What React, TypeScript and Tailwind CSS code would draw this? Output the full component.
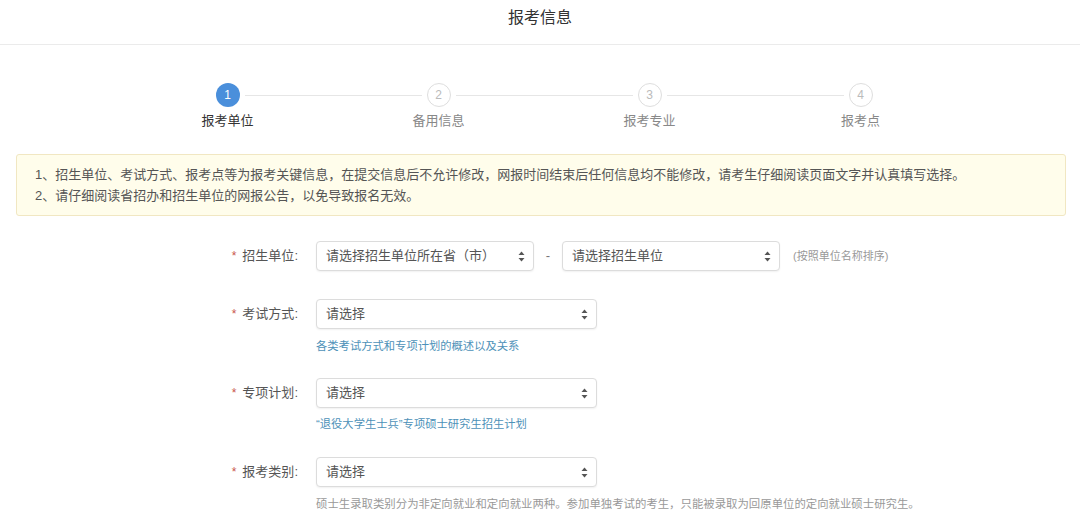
import React from "react";

const steps = ["报考单位", "备用信息", "报考专业", "报考点"];

function Arrows() {
  return (
    <svg width="7" height="11" viewBox="0 0 7 11" className="shrink-0">
      <path d="M3.5 0.5 L6.5 4 L0.5 4 Z" fill="#555" />
      <path d="M3.5 10.5 L6.5 7 L0.5 7 Z" fill="#555" />
    </svg>
  );
}

function FakeSelect({ text, width }: { text: string; width: string }) {
  return (
    <div
      className={`${width} h-[30px] flex items-center justify-between pl-[9px] pr-[8px] border border-[#dcdcdc] rounded-[4px] bg-white shadow-[0_1px_2px_rgba(0,0,0,0.06)] text-[13px] text-[#555]`}
    >
      <span>{text}</span>
      <Arrows />
    </div>
  );
}

function Label({ text }: { text: string }) {
  return (
    <div className="w-[116px] shrink-0 flex justify-end items-center pr-[18px] text-[13px] text-[#555]">
      <span className="text-[#c9564d] mr-[6px] text-[12px]">*</span>
      <span>{text}:</span>
    </div>
  );
}

export default function App() {
  return (
    <div className="w-[1080px] h-[520px] bg-white overflow-hidden font-['Liberation_Sans','Noto_Sans_CJK_SC',sans-serif]">
      {/* header */}
      <div className="h-[45px] border-b border-[#ebebeb] flex items-center justify-center">
        <span className="text-[16px] text-[#333] -mt-[9px]">报考信息</span>
      </div>

      {/* steps */}
      <div className="flex ml-[122px] pt-[38px]">
        {steps.map((s, i) => (
          <div key={s} className="w-[211px] flex flex-col items-center">
            <div className="w-full flex items-center">
              <div className={`flex-1 h-px mr-[5px] ${i === 0 ? "" : "bg-[#e6e6e6]"}`} />
              {i === 0 ? (
                <div className="w-[24px] h-[24px] rounded-full bg-[#4a8fdb] text-white text-[12px] flex items-center justify-center">
                  {i + 1}
                </div>
              ) : (
                <div className="w-[24px] h-[24px] rounded-full border border-[#dedede] text-[#bbb] text-[12px] flex items-center justify-center">
                  {i + 1}
                </div>
              )}
              <div className={`flex-1 h-px ml-[5px] ${i === steps.length - 1 ? "" : "bg-[#e6e6e6]"}`} />
            </div>
            <div className={`mt-[6px] text-[13px] leading-[16px] ${i === 0 ? "text-[#333]" : "text-[#888]"}`}>
              {s}
            </div>
          </div>
        ))}
      </div>

      {/* notice */}
      <div className="ml-4 mr-[14px] mt-[25px] border border-[#f1e7c2] bg-[#fffdeb] rounded-[3px] pl-[18px] py-[9px] text-[13px] leading-[21px] text-[#555]">
        <div>1、招生单位、考试方式、报考点等为报考关键信息，在提交信息后不允许修改，网报时间结束后任何信息均不能修改，请考生仔细阅读页面文字并认真填写选择。</div>
        <div>2、请仔细阅读省招办和招生单位的网报公告，以免导致报名无效。</div>
      </div>

      {/* form */}
      <div className="ml-[200px] mt-[25px] flex flex-col">
        <div className="flex items-center">
          <Label text="招生单位" />
          <FakeSelect text="请选择招生单位所在省（市）" width="w-[218px]" />
          <span className="w-[28px] text-center text-[13px] text-[#777]">-</span>
          <FakeSelect text="请选择招生单位" width="w-[218px]" />
          <span className="ml-[13px] text-[11px] text-[#999]">(按照单位名称排序)</span>
        </div>

        <div className="mt-[28px] flex items-center">
          <Label text="考试方式" />
          <FakeSelect text="请选择" width="w-[281px]" />
        </div>
        <div className="ml-[116px] mt-[10px] text-[11.3px] leading-[14px] text-[#4d91b8]">
          各类考试方式和专项计划的概述以及关系
        </div>

        <div className="mt-[25px] flex items-center">
          <Label text="专项计划" />
          <FakeSelect text="请选择" width="w-[281px]" />
        </div>
        <div className="ml-[116px] mt-[9px] text-[11.3px] leading-[14px] text-[#4d91b8]">
          “退役大学生士兵”专项硕士研究生招生计划
        </div>

        <div className="mt-[26px] flex items-center">
          <Label text="报考类别" />
          <FakeSelect text="请选择" width="w-[281px]" />
        </div>
        <div className="ml-[116px] mt-[10px] text-[11.4px] leading-[14px] text-[#999]">
          硕士生录取类别分为非定向就业和定向就业两种。参加单独考试的考生，只能被录取为回原单位的定向就业硕士研究生。
        </div>
      </div>
    </div>
  );
}
